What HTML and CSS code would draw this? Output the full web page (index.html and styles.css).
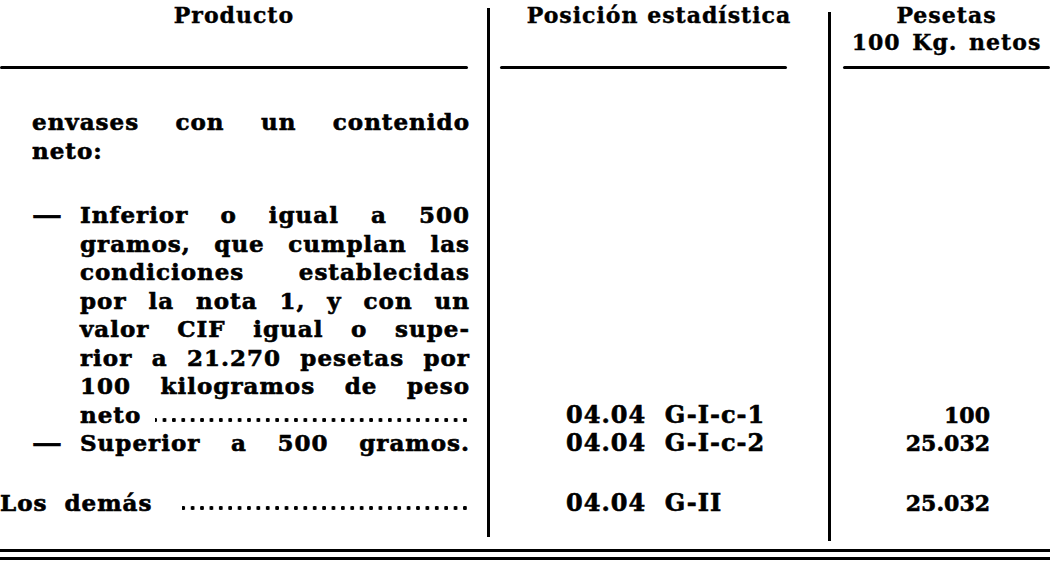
FILE: index.html
```html
<!DOCTYPE html>
<html lang="es">
<head>
<meta charset="utf-8">
<title>Tabla</title>
<link rel="stylesheet" href="styles.css">
</head>
<body>
<div class="page">
  <div class="table">
    <div class="head h1"><div class="htext">Producto</div><div class="rule r1"></div></div>
    <div class="vline v1"></div>
    <div class="head h2"><div class="htext">Posición estadística</div><div class="rule r2"></div></div>
    <div class="vline v2"></div>
    <div class="head h3"><div class="htext">Pesetas<br><span class="ws">100 Kg. netos</span></div><div class="rule r3"></div></div>

    <div class="c1 rowa">
      <div class="intro">
        <div class="jl">envases con un contenido</div>
        <div>neto:</div>
      </div>
      <div class="item">
        <span class="dash">—</span>
        <div class="itxt">
          <div class="jl">Inferior o igual a 500</div>
          <div class="jl">gramos, que cumplan las</div>
          <div class="jl">condiciones establecidas</div>
          <div class="jl">por la nota 1, y con un</div>
          <div class="jl">valor CIF igual o supe-</div>
          <div class="jl">rior a 21.270 pesetas por</div>
          <div class="jl">100 kilogramos de peso</div>
          <div class="lead"><span>neto</span><span class="dots"></span></div>
        </div>
      </div>
    </div>
    <div class="c2 rowa end">04.04&nbsp; G-I-c-1</div>
    <div class="c3 rowa end">100</div>

    <div class="c1 rowb">
      <div class="item">
        <span class="dash">—</span>
        <div class="itxt"><div class="jl">Superior a 500 gramos.</div></div>
      </div>
    </div>
    <div class="c2 rowb end">04.04&nbsp; G-I-c-2</div>
    <div class="c3 rowb end">25.032</div>

    <div class="c1 rowc end">
      <div class="lead"><span class="ws2">Los demás</span><span class="dots wide"></span></div>
    </div>
    <div class="c2 rowc end">04.04&nbsp; G-II</div>
    <div class="c3 rowc end">25.032</div>
  </div>
  <div class="double"><div class="dl"></div><div class="dl"></div></div>
</div>
</body>
</html>
```

FILE: styles.css
```css
html, body {
  margin: 0;
  padding: 0;
  background: #ffffff;
}

body {
  width: 1050px;
  height: 570px;
  overflow: hidden;
  color: #000000;
  font-family: "DejaVu Serif", "Liberation Serif", serif;
  font-weight: bold;
  font-size: 22px;
}

.table {
  display: grid;
  grid-template-columns: 487px 3px 338px 3px 219px;
  grid-template-rows: 69px auto 28.5px 60px 24px;
}

.head {
  grid-row: 1;
  display: flex;
  flex-direction: column;
  justify-content: space-between;
  text-align: center;
  line-height: 27px;
  padding-top: 2px;
  box-sizing: border-box;
  min-width: 0;
}

.h1 { grid-column: 1; padding-right: 19px; }
.h2 { grid-column: 3; }
.h3 { grid-column: 5; padding-left: 12px; }

.htext {
  letter-spacing: 1px;
  -webkit-text-stroke: 0.4px #000000;
  white-space: nowrap;
}

.ws {
  word-spacing: 3px;
}

.ws2 {
  word-spacing: 8px;
}

.rule {
  height: 3px;
  background: #000000;
  border-radius: 2px;
}

.r1 { width: 468px; }
.r2 { width: 287px; margin-left: 10px; }
.r3 { width: 207px; }

.vline {
  grid-row: 1 / -1;
  background: #000000;
  width: 3px;
}

.v1 { grid-column: 2; margin-top: 8px; margin-bottom: 5px; }
.v2 { grid-column: 4; margin-top: 12px; margin-bottom: 1px; }

.c1, .c2, .c3 {
  line-height: 28.5px;
  min-width: 0;
  -webkit-text-stroke: 0.6px #000000;
}

.c1 {
  grid-column: 1;
  padding-right: 17px;
  font-size: 23px;
  letter-spacing: 1px;
}

.c2 {
  grid-column: 3;
  padding-left: 76px;
  font-size: 24px;
  letter-spacing: 1px;
  white-space: nowrap;
}

.c3 {
  grid-column: 5;
  padding-right: 60px;
  text-align: right;
}

.rowa { grid-row: 2; }
.rowb { grid-row: 3; }
.rowc { grid-row: 4; }

.end { align-self: end; }

.intro {
  padding-top: 39px;
  padding-left: 32px;
  margin-bottom: 36px;
}

.jl {
  text-align: justify;
  text-align-last: justify;
}

.item {
  display: flex;
}

.dash {
  width: 48px;
  flex: none;
  padding-left: 32px;
  display: inline-block;
  transform: scaleX(1.3);
  transform-origin: 32px 50%;
}

.itxt {
  flex: 1;
  min-width: 0;
}

.lead {
  display: flex;
  white-space: nowrap;
  min-width: 0;
}

.dots {
  flex: 1;
  min-width: 0;
  margin-left: 14px;
  height: 28.5px;
  background-image: radial-gradient(circle, #000000 1.9px, transparent 2.4px);
  background-size: 9.4px 6px;
  background-repeat: repeat-x;
  background-position: right 0 top 16px;
}

.dots.wide {
  margin-left: 30px;
}

.double {
  margin-top: 7px;
  display: flex;
  flex-direction: column;
  gap: 5px;
}

.dl {
  height: 3px;
  background: #000000;
}
```
